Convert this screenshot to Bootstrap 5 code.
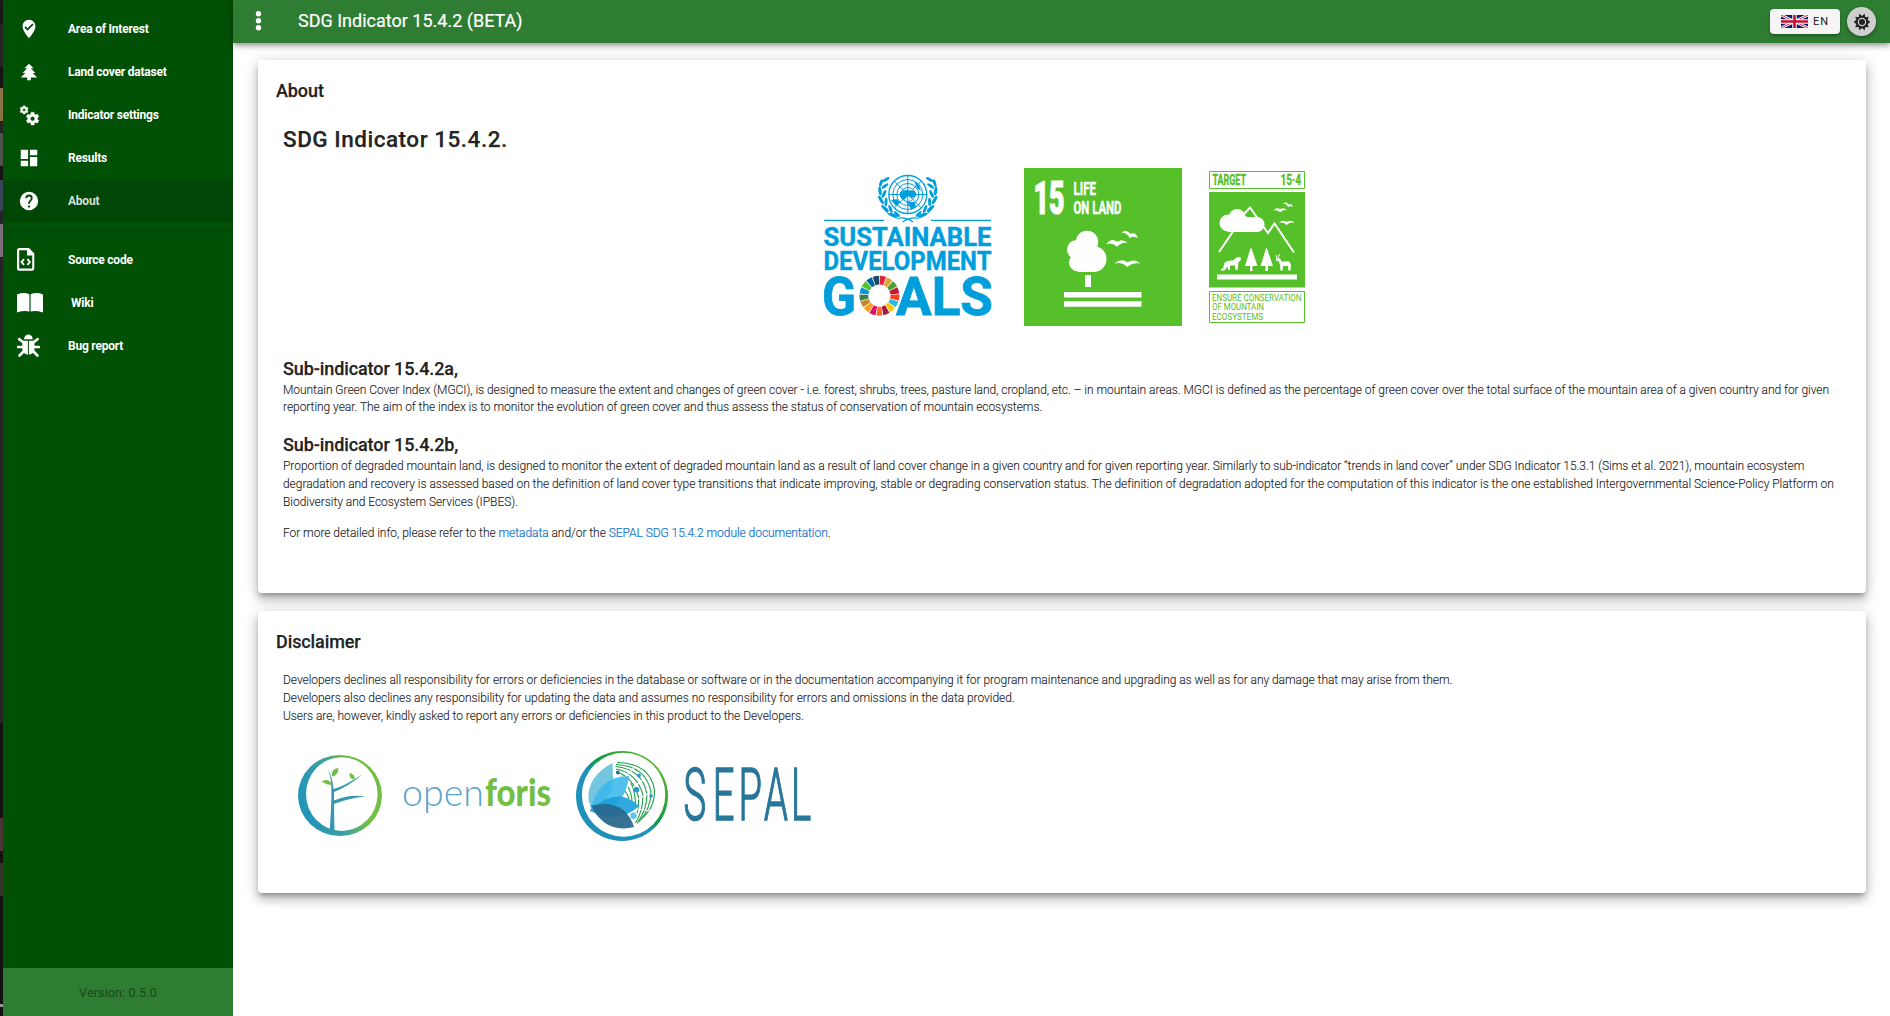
<!DOCTYPE html>
<html lang="en">
<head>
<meta charset="utf-8">
<title>SDG Indicator 15.4.2</title>
<link href="https://cdn.jsdelivr.net/npm/bootstrap@5.3.0/dist/css/bootstrap.min.css" rel="stylesheet">
<script src="https://cdn.jsdelivr.net/npm/bootstrap@5.3.0/dist/js/bootstrap.bundle.min.js"></script>
<style>
body{font-family:Roboto,"Liberation Sans",sans-serif;font-size:12.6px;line-height:18px;color:rgba(0,0,0,.87);background:#fff;height:1016px;overflow:hidden}
main{min-width:0}
.edge{width:3px;background:linear-gradient(#1a1a1a 0 8px,#151515 8px 24px,#242424 24px 67px,#141414 67px 88px,#8a7247 88px 121px,#242424 121px 133px,#4d5548 133px 166px,#141414 166px 180px,#38435a 180px 211px,#242424 211px 224px,#7d6b7e 224px 257px,#242424 257px 723px,#131313 723px 818px,#4c3535 818px 851px,#131313 851px 863px,#35342c 863px 896px,#131313 896px 1004px,#999 1004px 1007px,#131313 1007px)}
.side{width:230px;background:#005005;padding-top:7px}
.side-item{height:43px;padding-left:14px;color:#fff;font-size:12px;font-weight:700;letter-spacing:-.22px;text-decoration:none}
.side-item .ico{width:51px;flex:none;display:flex}
.side-item svg{fill:#fff;display:block}
.side-item svg.mdi{margin-left:.6px;overflow:visible}
.side-item.current{background:#004604;color:#d8dfd8}
.side-line{height:1px;background:#00430a;margin:8px 0 7px}
.ver{height:48px;background:#2e7d32;color:#18481a;font-size:12.6px;letter-spacing:.1px;padding-top:2px}
.topbar{height:43px;background:#2e7d32;color:#fff;box-shadow:0 2px 4px -1px rgba(0,0,0,.25),0 4px 5px rgba(0,0,0,.16),0 1px 10px rgba(0,0,0,.12);position:relative;z-index:2;padding:0 14px 0 22px}
.topbar h1{font-size:18px;font-weight:400;line-height:24px;margin:-1px 0 0 36px;-webkit-text-stroke:.2px}
.lang{height:25px;width:70px;background:#f5f5f5;border-radius:4px;font-size:11px;letter-spacing:.95px;color:#222;box-shadow:0 2px 3px rgba(0,0,0,.3)}
.round{width:29px;height:29px;border-radius:50%;background:#cfcfcf;box-shadow:0 2px 4px rgba(0,0,0,.35)}
.panel{margin:0 24px 18px 25px;background:#fff;border-radius:4px;box-shadow:0 4px 5px -2px rgba(0,0,0,.3),0 7px 10px 1px rgba(0,0,0,.16),0 2px 16px 1px rgba(0,0,0,.14);padding:17px 18px}
.panel h2,.panel h3,.panel h4{margin:0;font-weight:500;-webkit-text-stroke:.25px;letter-spacing:-.1px}
.panel h2{font-size:18px;line-height:28px}
.panel h3{font-size:22.5px;line-height:29px;letter-spacing:.52px}
.panel h4{font-size:18px;line-height:25px}
.inner{padding:0 7px}
.inner p{margin:0;font-size:12px;letter-spacing:-.05px;font-weight:300;white-space:nowrap;color:#222;-webkit-text-stroke:.1px}
.inner a,.inner a:hover{color:#1976d2;text-decoration:none;-webkit-text-stroke:.2px}
.panel svg{overflow:visible}
svg text{font-family:Roboto,"Liberation Sans",sans-serif}
svg .wordmark{font-family:Lato,sans-serif}
</style>
</head>
<body class="d-flex">
<div class="edge flex-shrink-0"></div>
<nav class="side flex-shrink-0 d-flex flex-column">
  <a class="side-item d-flex align-items-center"><span class="ico"><svg class="mdi" width="22" height="22" viewBox="0 0 24 24"><path d="M12,2C15.86,2 19,5.14 19,9C19,14.25 12,22 12,22C12,22 5,14.25 5,9C5,5.14 8.14,2 12,2M10.47,14L17,7.41L15.6,6L10.47,11.18L8.4,9.09L7,10.5L10.47,14Z"/></svg></span>Area of Interest</a>
  <a class="side-item d-flex align-items-center"><span class="ico"><svg class="mdi" width="22" height="22" viewBox="0 0 24 24"><path d="M10,21V18H3L8,13H5L10,8H7L12,3L17,8H14L19,13H16L21,18H14V21H10Z"/></svg></span>Land cover dataset</a>
  <a class="side-item d-flex align-items-center"><span class="ico"><svg class="mdi" width="22" height="22" viewBox="0 0 24 24"><path d="M15.9,18.45C17.25,18.45 18.35,17.35 18.35,16C18.35,14.65 17.25,13.55 15.9,13.55C14.54,13.55 13.45,14.65 13.45,16C13.45,17.35 14.54,18.45 15.9,18.45M21.1,16.68L22.58,17.84C22.71,17.95 22.75,18.13 22.66,18.29L21.26,20.71C21.17,20.86 21,20.92 20.83,20.86L19.09,20.16C18.73,20.44 18.33,20.67 17.91,20.85L17.64,22.7C17.62,22.87 17.47,23 17.3,23H14.5C14.32,23 14.18,22.87 14.15,22.7L13.89,20.85C13.46,20.67 13.07,20.44 12.71,20.16L10.96,20.86C10.81,20.92 10.62,20.86 10.54,20.71L9.14,18.29C9.05,18.13 9.09,17.95 9.22,17.84L10.7,16.68L10.65,16L10.7,15.31L9.22,14.16C9.09,14.05 9.05,13.86 9.14,13.71L10.54,11.29C10.62,11.13 10.81,11.07 10.96,11.13L12.71,11.84C13.07,11.56 13.46,11.32 13.89,11.15L14.15,9.29C14.18,9.13 14.32,9 14.5,9H17.3C17.47,9 17.62,9.13 17.64,9.29L17.91,11.15C18.33,11.32 18.73,11.56 19.09,11.84L20.83,11.13C21,11.07 21.17,11.13 21.26,11.29L22.66,13.71C22.75,13.86 22.71,14.05 22.58,14.16L21.1,15.31L21.15,16L21.1,16.68M6.69,8.07C7.56,8.07 8.26,7.37 8.26,6.5C8.26,5.63 7.56,4.92 6.69,4.92A1.58,1.58 0 0,0 5.11,6.5C5.11,7.37 5.82,8.07 6.69,8.07M10.03,6.94L11,7.68C11.07,7.75 11.09,7.87 11.03,7.97L10.13,9.53C10.08,9.63 9.96,9.67 9.86,9.63L8.74,9.18L8,9.62L7.81,10.81C7.79,10.92 7.7,11 7.59,11H5.79C5.67,11 5.58,10.92 5.56,10.81L5.4,9.62L4.64,9.18L3.52,9.63C3.41,9.67 3.3,9.63 3.24,9.53L2.34,7.97C2.28,7.87 2.31,7.75 2.39,7.68L3.34,6.94L3.31,6.5L3.34,6.06L2.39,5.32C2.31,5.25 2.28,5.13 2.34,5.03L3.24,3.47C3.3,3.37 3.41,3.33 3.52,3.37L4.63,3.82L5.4,3.38L5.56,2.19C5.58,2.08 5.67,2 5.79,2H7.59C7.7,2 7.79,2.08 7.81,2.19L8,3.38L8.74,3.82L9.86,3.37C9.96,3.33 10.08,3.37 10.13,3.47L11.03,5.03C11.09,5.13 11.07,5.25 11,5.32L10.03,6.06L10.06,6.5L10.03,6.94Z" stroke="#fff" stroke-width=".4"/></svg></span>Indicator settings</a>
  <a class="side-item d-flex align-items-center"><span class="ico"><svg class="mdi" width="22" height="22" viewBox="0 0 24 24"><path d="M13,3V9H21V3M13,21H21V11H13M3,21H11V15H3M3,13H11V3H3V13Z"/></svg></span>Results</a>
  <a class="side-item current d-flex align-items-center"><span class="ico"><svg class="mdi" width="22" height="22" viewBox="0 0 24 24"><path d="M15.07,11.25L14.17,12.17C13.45,12.89 13,13.5 13,15H11V14.5C11,13.39 11.45,12.39 12.17,11.67L13.41,10.41C13.78,10.05 14,9.55 14,9C14,7.89 13.1,7 12,7A2,2 0 0,0 10,9H8A4,4 0 0,1 12,5A4,4 0 0,1 16,9C16,9.88 15.64,10.67 15.07,11.25M13,19H11V17H13M12,2A10,10 0 1,0 22,12A10 10 0 0,0 12,2Z"/></svg></span>About</a>
  <div class="side-line"></div>
  <a class="side-item d-flex align-items-center"><span class="ico"><svg width="23" height="23" viewBox="0 0 23 23"><path d="M2.500 0H12l5.300 5.400V20.500a2.300 2.300 0 0 1-2.300 2.300H2.300A2.300 2.300 0 0 1 0 20.500V2.300A2.300 2.300 0 0 1 2.500 0ZM2.200 2.200V20.600H15.200V7.400H10V2.200Z" fill-rule="evenodd"/><path d="M7 11.200 4.600 14 7 16.800M10.400 11.200 12.800 14 10.400 16.800" fill="none" stroke="#fff" stroke-width="1.900"/></svg></span>Source code</a>
  <a class="side-item d-flex align-items-center"><span class="ico"><svg width="26" height="20" viewBox="0 0 26 20"><path d="M0 1.500Q6.500-1.200 12.400 1.200V18.500Q7 17.200 0 19.500ZM13.600 1.200Q19.500-1.200 26 1.500V19.500Q19 17.200 13.600 18.500Z"/></svg></span><span style="padding-left:3px">Wiki</span></a>
  <a class="side-item d-flex align-items-center"><span class="ico"><svg width="23" height="23" viewBox="0 0 23 23"><path d="M7 5.300a4.400 4.800 0 0 1 8.800 0ZM5.300 6.700H10.900V20.800Q5.300 19.800 5.300 14.500ZM11.900 6.700H17.500V14.500Q17.500 19.800 11.900 20.800Z"/><path d="M6.500 8.500 2.300 5.200M16.300 8.500 20.500 5.200M6 13H1M17 13H22M7 17 2.500 21.500M16 17 20.400 21.500" stroke="#fff" stroke-width="2.700" stroke-linecap="round"/></svg></span>Bug report</a>
  <div class="ver mt-auto d-flex align-items-center justify-content-center">Version: 0.5.0</div>
</nav>
<main class="flex-grow-1">
  <header class="topbar d-flex align-items-center">
    <svg width="7" height="21" viewBox="0 0 7 21" fill="#fff"><circle cx="3.500" cy="2.700" r="2.700"/><circle cx="3.500" cy="9.700" r="2.700"/><circle cx="3.500" cy="16.700" r="2.700"/></svg>
    <h1>SDG Indicator 15.4.2 (BETA)</h1>
    <div class="lang ms-auto d-flex align-items-center justify-content-center">
      <svg width="27" height="13" viewBox="0 0 54 26" style="margin-right:5px"><path fill="#012169" d="M0 0h54v26H0z"/><path d="M0 0 54 26M54 0 0 26" stroke="#fff" stroke-width="5.500"/><path d="M0 0 54 26M54 0 0 26" stroke="#c8102e" stroke-width="1.800"/><path d="M27 0V26M0 13H54" stroke="#fff" stroke-width="9"/><path d="M27 0V26M0 13H54" stroke="#c8102e" stroke-width="5.200"/></svg>EN
    </div>
    <div class="round d-flex align-items-center justify-content-center" style="margin-left:7px">
      <svg width="18" height="18" viewBox="0 0 24 24" fill="#222"><path fill-rule="evenodd" d="M12 4 15.500 1 16.500 5.500 21 5 19.500 9 23 12 19.500 15 21 19 16.500 18.500 15.500 23 12 20 8.500 23 7.500 18.500 3 19 4.500 15 1 12 4.500 9 3 5 7.500 5.500 8.500 1ZM12 6.300a5.700 5.700 0 1 0 0 11.400a5.700 5.700 0 0 0 0-11.400Z"/><circle cx="12" cy="12" r="4"/></svg>
    </div>
  </header>

  <section class="panel" style="height:533px;margin-top:17px">
    <h2>About</h2>
    <div class="inner">
      <h3 style="margin-top:20px">SDG Indicator 15.4.2.</h3>
      <div class="d-flex justify-content-center align-items-start" style="margin:14px 0 30px">
        <svg width="170" height="146" viewBox="0 0 170 146" fill="#009edb" style="margin:4px 30px 0 6px">
          <defs><g id="leaves"><g stroke="none"><ellipse cx="57" cy="11" rx="1.500" ry="4" transform="rotate(18 57 11)"/><ellipse cx="62" cy="7.500" rx="1.400" ry="4" transform="rotate(60 62 7.500)"/><ellipse cx="61" cy="14" rx="1.400" ry="4" transform="rotate(55 61 14)"/><ellipse cx="56" cy="19" rx="1.600" ry="4.500" transform="rotate(-8 56 19)"/><ellipse cx="60" cy="22" rx="1.500" ry="4.200" transform="rotate(25 60 22)"/><ellipse cx="57" cy="28" rx="1.600" ry="4.800" transform="rotate(-30 57 28)"/><ellipse cx="62" cy="30" rx="1.500" ry="4.300" transform="rotate(2 62 30)"/><ellipse cx="61" cy="36.500" rx="1.600" ry="4.800" transform="rotate(-48 61 36.500)"/><ellipse cx="66.500" cy="37" rx="1.500" ry="4.300" transform="rotate(-20 66.500 37)"/><ellipse cx="69" cy="43" rx="1.600" ry="5" transform="rotate(-72 69 43)"/><ellipse cx="73" cy="42" rx="1.300" ry="4" transform="rotate(-45 73 42)"/></g><path d="M76 46Q82 45.500 89 50M76 46.500Q67 46 60 37" fill="none" stroke="#009edb" stroke-width="1.200"/></g></defs>
          <use href="#leaves"/><use href="#leaves" transform="translate(167.600 0) scale(-1 1)"/>
          <g fill="none" stroke="#009edb" stroke-width="1"><circle cx="83.800" cy="22.500" r="19" stroke-width="1.300"/><circle cx="83.800" cy="22.500" r="15"/><circle cx="83.800" cy="22.500" r="11"/><circle cx="83.800" cy="22.500" r="7"/><path d="M83.800 3.500V41.500M64.800 22.500H102.800M70.400 9.100 97.200 35.900M97.200 9.100 70.400 35.900"/></g>
          <path d="M76 20 82 18 91 19 93 23 88 26 84 24 80 28 76 25ZM82 30 91 30 92 35 87 38 85 33ZM67 28 73 27 76 31 72 34ZM90 9 95 13 97 19 93 16Z"/>
          <path d="M0 47.800H60V48.900H0ZM107 47.800H167V48.900H107Z"/>
          <g font-weight="700"><text x="-.5" y="74" font-size="25.500" textLength="168" lengthAdjust="spacingAndGlyphs" stroke="#009edb" stroke-width=".4">SUSTAINABLE</text><text x="-.5" y="98" font-size="25" textLength="168" lengthAdjust="spacingAndGlyphs" stroke="#009edb" stroke-width=".4">DEVELOPMENT</text><text x="-2" y="143" font-size="54" textLength="34" lengthAdjust="spacingAndGlyphs" stroke="#009edb" stroke-width=".8">G</text><text x="72" y="143" font-size="54" textLength="97" lengthAdjust="spacingAndGlyphs" stroke="#009edb" stroke-width=".8">ALS</text></g>
          <g id="wheel" transform="translate(55.400 123.700) rotate(-90)" fill="none" stroke-width="8.800"></g>
        </svg>
        <svg width="158" height="158" viewBox="0 0 158 158" fill="#fff" style="margin-right:27px">
          <path fill="#56c02b" d="M0 0h158v158H0z"/>
          <g font-weight="900" stroke="#fff"><text x="9.500" y="45.500" font-size="46" stroke-width="1.200" textLength="31" lengthAdjust="spacingAndGlyphs">15</text><g font-weight="700" stroke-width=".4"><text x="49.500" y="26.500" font-size="18.500" textLength="22.500" lengthAdjust="spacingAndGlyphs">LIFE</text><text x="49.500" y="45.500" font-size="18.500" textLength="48" lengthAdjust="spacingAndGlyphs">ON LAND</text></g></g>
          <circle cx="63" cy="74" r="11.200"/><circle cx="52.500" cy="81.500" r="9.500"/><circle cx="69.500" cy="91" r="13"/><circle cx="54" cy="94.500" r="9"/><path d="M54 82H70V104H54ZM61 107h6v12h-6ZM40 124h77.500v5.500H40ZM40 133.300h77.500v5.500H40Z"/>
          <g id="birds"><path d="M82 76Q88 69.500 93 73.800Q98 70 104 75Q97.500 74 93 78.800Q88 74 82 76Z"/><path d="M90.500 95.500Q98 89.500 103.500 94.300Q110 90 116.500 95.500Q108 94.300 103.500 99Q98 93.800 90.500 95.500Z"/><path d="M97.500 64.500Q103 61 106.500 66Q111.500 63.500 114 70.300Q110 67.500 105.500 70Q104 65 97.500 64.500Z"/></g>
        </svg>
        <svg width="97" height="153" viewBox="0 0 97 153" fill="#56c02b" style="margin-top:3px">
          <g fill="none" stroke="#56c02b"><path d="M.5.500H95.500V17.500H.5ZM.5 120.500H95.500V151.500H.5Z"/></g>
          <g font-weight="700" font-size="14.500" stroke="#56c02b" stroke-width=".4"><text x="3.500" y="14.200" textLength="33.500" lengthAdjust="spacingAndGlyphs">TARGET</text><text x="71.500" y="14.200" textLength="20.500" lengthAdjust="spacingAndGlyphs">15·4</text></g>
          <path d="M0 21h96v95.500H0z"/>
          <g fill="none" stroke="#fff" stroke-width="2"><path d="M10 81 28.500 54M35 43 41 36.500 59 62 65.500 52.500 85 81.500"/></g>
          <g fill="#fff"><circle cx="28" cy="46" r="8"/><circle cx="19" cy="52" r="8.500"/><circle cx="33" cy="52" r="8"/><circle cx="48" cy="53.500" r="7.500"/><path d="M19 46H48V61H19ZM42 76 36 95H41V100H43.500V95H48.500ZM57.500 76 51.500 95H56.500V100H59V95H64ZM8 103.500H88V108.500H8Z"/>
          <path d="M12 98 14 97.500 15.500 92Q18 89 24 89.500L27.500 86.500 31.500 86 32 89 29.500 91 28.500 99H26.500L26 94.500 21 94.500 21 99H19L18.500 95.500 15.500 99.500H12Z"/>
          <path d="M69 92 72.500 90.500H80.500L82 94 81.500 99.500H79.500L79 95 74 95 73.500 99.500H71.500L71 93.500 69.500 90 66.500 89.500 68 87 71 87.500 72.500 90.500Z"/><path d="M69 87 70.500 83M67.800 87 67 84" fill="none" stroke="#fff"/></g>
          <use href="#birds" fill="#fff" transform="translate(13.500 -7.500) scale(.62)"/>
          <g font-size="8.500"><text x="3" y="130" textLength="89.500" lengthAdjust="spacingAndGlyphs">ENSURE CONSERVATION</text><text x="3" y="139" textLength="52" lengthAdjust="spacingAndGlyphs">OF MOUNTAIN</text><text x="3" y="148.500" textLength="51" lengthAdjust="spacingAndGlyphs">ECOSYSTEMS</text></g>
        </svg>
      </div>
      <h4>Sub-indicator 15.4.2a,</h4>
      <p style="padding-top:.6px;line-height:17.600px">Mountain Green Cover Index (MGCI), is designed to measure the extent and changes of green cover - i.e. forest, shrubs, trees, pasture land, cropland, etc. – in mountain areas. MGCI is defined as the percentage of green cover over the total surface of the mountain area of a given country and for given<br>reporting year. The aim of the index is to monitor the evolution of green cover and thus assess the status of conservation of mountain ecosystems.</p>
      <h4 style="margin-top:15.200px">Sub-indicator 15.4.2b,</h4>
      <p style="letter-spacing:-.045px">Proportion of degraded mountain land, is designed to monitor the extent of degraded mountain land as a result of land cover change in a given country and for given reporting year. Similarly to sub-indicator “trends in land cover” under SDG Indicator 15.3.1 (Sims et al. 2021), mountain ecosystem<br>degradation and recovery is assessed based on the definition of land cover type transitions that indicate improving, stable or degrading conservation status. The definition of degradation adopted for the computation of this indicator is the one established Intergovernmental Science-Policy Platform on<br>Biodiversity and Ecosystem Services (IPBES).</p>
      <p style="margin-top:13px">For more detailed info, please refer to the <a href="#">metadata</a> and/or the <a href="#">SEPAL SDG 15.4.2 module documentation</a>.</p>
    </div>
  </section>

  <section class="panel" style="height:282px">
    <h2>Disclaimer</h2>
    <div class="inner">
      <p style="margin-top:16px;line-height:17.800px">Developers declines all responsibility for errors or deficiencies in the database or software or in the documentation accompanying it for program maintenance and upgrading as well as for any damage that may arise from them.<br>Developers also declines any responsibility for updating the data and assumes no responsibility for errors and omissions in the data provided.<br>Users are, however, kindly asked to report any errors or deficiencies in this product to the Developers.</p>
      <div class="d-flex" style="margin-top:19.600px">
        <svg width="285" height="100" viewBox="283 745 285 100">
          <defs><linearGradient id="g1" x1="0" y1=".6" x2="1" y2=".3"><stop offset="0" stop-color="#2193bb"/><stop offset=".4" stop-color="#3a9fa5"/><stop offset=".7" stop-color="#72bf44"/></linearGradient><linearGradient id="g2" x1="0" y1="1" x2="1" y2="0"><stop offset="0" stop-color="#1f8fb8"/><stop offset=".45" stop-color="#1f91bb"/><stop offset=".55" stop-color="#0c9a4a"/><stop offset="1" stop-color="#7fbf1e"/></linearGradient></defs>
          <path fill="url(#g1)" fill-rule="evenodd" d="M340 755a42 40.500 0 1 0 0 81a42 40.500 0 0 0 0-81ZM341.800 757.300a35.800 36.800 0 1 1 0 73.600a35.800 36.800 0 0 1 0-73.600Z"/>
          <path fill="#3599ad" d="M327.500 768Q332.500 777 333.500 789Q345 786 363 774Q349 786 334 792V800.500Q349 794 365 796.500Q349 798 334 804L334.500 832H329.500Q332 800 331.200 786Q331 776 327.500 768Z"/>
          <path fill="#72bf44" d="M332 775Q331 769 338.500 768Q338 776 332 776.500ZM332 785Q327 785 321.500 781.500Q328 777.500 332 784ZM354.500 779.500Q349 779 349.500 773Q355.500 774 354.500 779.500Z"/>
          <text class="wordmark" x="402" y="805.500" font-size="37" font-weight="300" fill="#5da3c7" textLength="82" lengthAdjust="spacingAndGlyphs">open</text><text class="wordmark" x="485" y="805.500" font-size="37" font-weight="900" fill="#72bf44" textLength="66" lengthAdjust="spacingAndGlyphs">foris</text>
        </svg>
        <svg width="250" height="100" viewBox="568 745 250 100">
          <path fill="url(#g2)" fill-rule="evenodd" d="M622 751a46 45 0 1 0 0 90a46 45 0 0 0 0-90ZM623.600 752.700a41.700 42 0 1 1 0 84a41.700 42 0 0 1 0-84Z"/>
          <g fill="none" stroke="#1fa04a" stroke-width="1.100"><path d="M617 762.500Q650 763 654.500 790Q655 808 641 819"/><path d="M616 764.500Q646 766 651 792Q651 808 639 822"/><path d="M615.500 766.500Q642 769 647 794Q647 810 637 823.500"/><path d="M616 769Q637 773 643 795Q643 811 635.500 823"/><path d="M616.500 772Q633 777 638.500 797Q639 807 637 813"/><path d="M631 783Q635 791 635.500 804M628 787Q632 794 632 802M625 791Q628 795 629 799"/></g>
          <g stroke="#fff" stroke-width="1.200"><path d="M625 777 634 768M633 788 645 778M638 799 650 793M636 809 652 811"/></g>
          <path fill="#72c7df" d="M612.500 763Q587 776 588.500 800L591 808Q611 805 613 780Z"/>
          <path fill="#3bb8ea" fill-opacity=".88" d="M629 776Q597 776 590 812Q625 812 629 776Z"/>
          <path fill="#1a9edb" fill-opacity=".9" d="M639 806Q618 785 590 810Q604 821 627 814Q634 811 639 806Z"/>
          <path fill="#28678c" fill-opacity=".93" d="M591 805.500Q625 798 634 827Q605 834 591 805.500Z"/>
          <circle cx="617.800" cy="772.500" r="1.900" fill="#21719d"/><circle cx="639" cy="775.500" r="1.900" fill="#229ad1"/><circle cx="636.500" cy="789.700" r="2.700" fill="#229ad1"/><circle cx="651" cy="796" r="1.800" fill="#229ad1"/><circle cx="633.500" cy="815.700" r="3.200" fill="#5cc4e0"/>
          <text transform="translate(683.500 820) scale(.53 1)" x="0 55 104 152 203" y="0" font-size="72" font-weight="300" fill="#28769a" stroke="#28769a" stroke-width="1.600">SEPAL</text>
        </svg>
      </div>
    </div>
  </section>
</main>
<script>
// Seventeen goal colours, clockwise from the top of the wheel
const goals='#e5243b #dda63a #4c9f38 #c5192d #ff3a21 #26bde2 #fcc30b #a21942 #fd6925 #dd1367 #fd9d24 #bf8b2e #3f7e44 #0a97d9 #56c02b #00689d #19486a'.split(' ');
document.getElementById('wheel').innerHTML=goals.map((c,i)=>`<circle r="15.500" pathLength="170" stroke="${c}" stroke-dasharray="8.700 161.300" stroke-dashoffset="${-10*i-.6}"/>`).join('');
</script>
</body>
</html>
